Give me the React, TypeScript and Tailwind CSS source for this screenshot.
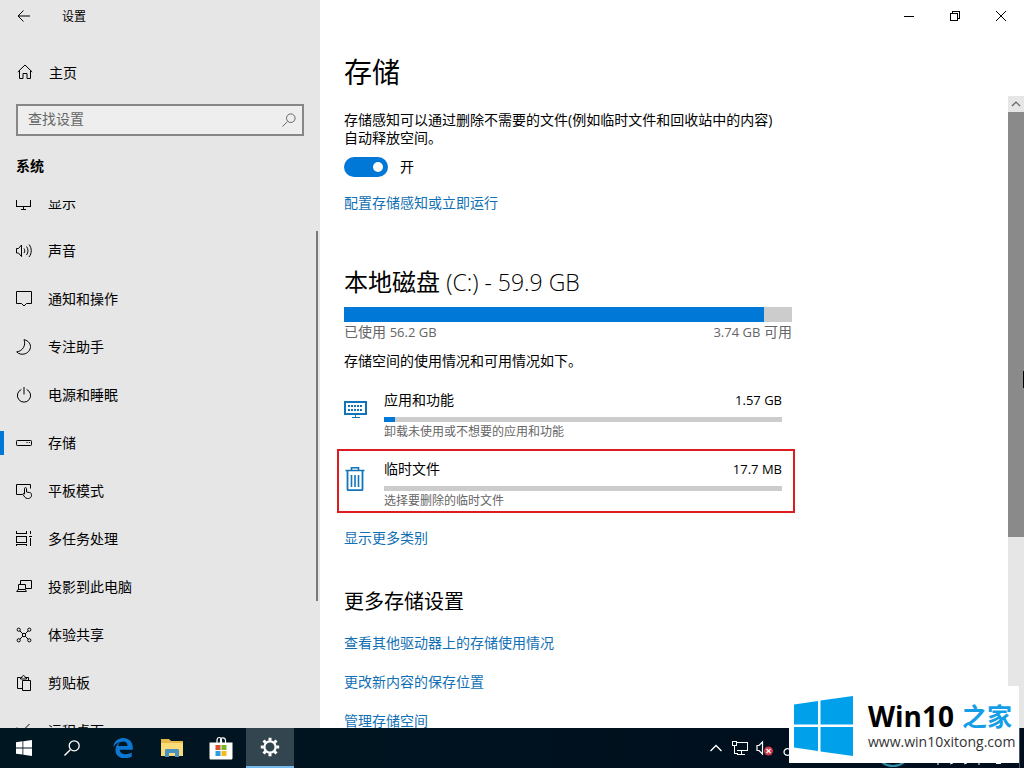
// src/App.tsx
import { useState } from "react";
import type { ReactNode } from "react";

type NavItem = { label: string; icon: ReactNode; active?: boolean };

function Icon({ children, crisp }: { children: ReactNode; crisp?: boolean }) {
  return (
    <svg
      viewBox="0 0 16 16"
      className="h-4 w-4 shrink-0"
      fill="none"
      stroke="currentColor"
      shapeRendering={crisp ? "crispEdges" : "auto"}
      aria-hidden="true"
    >
      {children}
    </svg>
  );
}

const NAV: NavItem[] = [
  {
    label: "显示",
    icon: (
      <Icon crisp>
        <path d="M.5 2.5h14v9H.5zM7.5 12v2M5 14.5h5" />
      </Icon>
    ),
  },
  {
    label: "声音",
    icon: (
      <Icon>
        <path d="M.5 5.500h2l3-3.500v11.500l-3-3.500h-2z" />
        <path d="M8 5.500c1 1.300 1 3.200 0 4.500M10.500 3.500c2 2.500 2 6 0 8.500M13 1.500c3 3.700 3 8.800 0 12.500" />
      </Icon>
    ),
  },
  {
    label: "通知和操作",
    icon: (
      <Icon>
        <path d="M.5.5h15v12h-5L8 15l-2.500-2.500h-5z" />
      </Icon>
    ),
  },
  {
    label: "专注助手",
    icon: (
      <Icon>
        <path d="M8 .7c2.200 5.600-1.300 11.400-7.300 12.200 2 2.200 5.400 3 8.600 1.800 3.700-1.500 5.900-5 5-8.700C13.500 3.200 11 1.100 8 .7z" />
      </Icon>
    ),
  },
  {
    label: "电源和睡眠",
    icon: (
      <Icon>
        <path d="M8 0v7.500M5.300 2.500a6.600 6.600 0 1 0 5.400 0" />
      </Icon>
    ),
  },
  {
    label: "存储",
    active: true,
    icon: (
      <Icon>
        <rect x=".5" y="5.500" width="15" height="5" rx=".8" />
        <path d="M10.500 7.500h1M12.800 7.500h1" />
      </Icon>
    ),
  },
  {
    label: "平板模式",
    icon: (
      <Icon>
        <path d="M6.500 11.500h-6V1.500h14v4" />
        <path d="M8.500 11V5.700c0-1.500 2-1.500 2 0V9l3.300.6c1 .2 1.700.8 1.700 1.700v.9c0 1.900-1.300 3.300-3.200 3.300h-.8c-1.200 0-2-.5-2.600-1.300L7 11.600c-.6-1 .6-1.700 1.500-.6z" />
      </Icon>
    ),
  },
  {
    label: "多任务处理",
    icon: (
      <Icon crisp>
        <path d="M.5 0v2.500h10V0M.5 5.500h10v6H.5zM.5 15v-1.500h10V15M14.500 0v3M14.500 7v8M13 5.500h3" />
      </Icon>
    ),
  },
  {
    label: "投影到此电脑",
    icon: (
      <Icon>
        <path d="M4.500 5V1.500h11v8h-5.500M2.500 10V5.500h7V10M2 10.500h7.500l.8 2H.7z" />
      </Icon>
    ),
  },
  {
    label: "体验共享",
    icon: (
      <Icon>
        <circle cx="2.700" cy="2.700" r="1.600" />
        <circle cx="13.300" cy="2.700" r="1.600" />
        <circle cx="2.700" cy="13.300" r="1.600" />
        <circle cx="13.300" cy="13.300" r="1.600" />
        <circle cx="8" cy="8" r="1.700" />
        <path d="M3.900 3.900l2.900 2.900M12.100 3.900L9.200 6.800M3.900 12.100l2.900-2.900M12.100 12.100L9.200 9.200" />
      </Icon>
    ),
  },
  {
    label: "剪贴板",
    icon: (
      <Icon>
        <path d="M6.500 13.500h-5v-11H4M10 2.500h2.500V5M4.500 4V2.500H6c0-2.600 3-2.600 3 0h1.500V4zM6.500 5.500h8v10h-8z" />
      </Icon>
    ),
  },
  {
    label: "远程桌面",
    icon: (
      <Icon>
        <path d="M13.500 1L6.500 8l7 7M1 4.500l3.500 3.500L1 11.500" />
      </Icon>
    ),
  },
];

const CATEGORIES = [
  {
    name: "应用和功能",
    size: "1.57 GB",
    hint: "卸载未使用或不想要的应用和功能",
    percent: 2.8,
    marked: false,
    icon: (
      <svg viewBox="0 0 24 24" className="h-6 w-6" fill="none" stroke="#1374b8" shapeRendering="crispEdges" aria-hidden="true">
        <path d="M1 4h21v12H1z" strokeWidth="2" />
        <path d="M11.500 17v2M8 19.500h8" />
        <path d="M4 8h15M4 12h15" strokeWidth="2" strokeDasharray="2 1" />
      </svg>
    ),
  },
  {
    name: "临时文件",
    size: "17.7 MB",
    hint: "选择要删除的临时文件",
    percent: 0,
    marked: true,
    icon: (
      <svg viewBox="0 0 24 24" className="h-6 w-6" fill="none" stroke="#1374b8" aria-hidden="true">
        <path d="M1.500 3.500h19M7.500 3V.8h7V3" strokeWidth="1.600" />
        <path d="M3.500 4v18.200c0 .6.400 1 1 1h13c.6 0 1-.4 1-1V4" strokeWidth="1.800" />
        <path d="M7.500 8v12M11 8v12M14.500 8v12" strokeWidth="1.600" />
      </svg>
    ),
  },
];

const MORE_LINKS = ["查看其他驱动器上的存储使用情况", "更改新内容的保存位置", "管理存储空间"];

const linkClass = "text-sm leading-5 text-[#1170b5] hover:text-gray-500";

function Sidebar() {
  return (
    <aside className="relative flex w-80 shrink-0 flex-col bg-[#e6e6e6]">
      <div className="flex h-8 items-center pl-4">
        <button type="button" aria-label="返回" className="mr-[30px]">
          <Icon>
            <path d="M14 8H2M7.500 2.500L2 8l5.500 5.500" />
          </Icon>
        </button>
        <span className="pt-0.5 text-xs leading-4">设置</span>
      </div>

      <a href="#home" className="mt-4 flex h-12 items-center gap-4 pl-[17px] text-sm">
        <Icon>
          <path d="M.8 8L8 1l7.200 7M2.500 6.500v8h3.500v-5h4v5h3.500v-8" />
        </Icon>
        <span className="pt-0.5">主页</span>
      </a>

      <label className="mx-4 mt-2 flex h-8 items-center border-2 border-[#868686] bg-[#eeeeee] pr-[5px] text-[#666666]">
        <input
          type="text"
          aria-label="查找设置"
          placeholder="查找设置"
          className="min-w-0 flex-1 bg-transparent pb-0.5 pl-[10px] text-sm leading-5 outline-none placeholder:text-[#666666]"
        />
        <Icon>
          <path d="M1.500 14.500L6.500 9.500" />
          <circle cx="9.800" cy="6.200" r="4.300" />
        </Icon>
      </label>

      <h2 className="mt-5 pl-4 text-sm leading-5 font-bold">系统</h2>

      {/* list is scrolled a little, so the first entry is cut */}
      <nav className="mt-6 min-h-0 flex-1 overflow-hidden">
        <ul className="-mt-[21px]">
          {NAV.map((item) => (
            <li key={item.label}>
              <a href="#nav" className="flex h-12 items-center text-sm">
                <span className={item.active ? "h-6 w-1 bg-[#0078d7]" : "h-6 w-1"} />
                <span className="mr-4 ml-3 pb-px">{item.icon}</span>
                {item.label}
              </a>
            </li>
          ))}
        </ul>
      </nav>
      <div className="absolute top-[231px] right-[2px] h-[370px] w-[2px] bg-[#7a7a7a]" />
    </aside>
  );
}

function WindowButtons() {
  return (
    <div className="flex h-8 justify-end">
      <button type="button" aria-label="最小化" className="flex w-[46px] items-center justify-center">
        <Icon crisp>
          <path d="M3 8.500h10" />
        </Icon>
      </button>
      <button type="button" aria-label="还原" className="flex w-[46px] items-center justify-center">
        <Icon crisp>
          <path d="M3.500 5.500h7v7h-7zM5.500 5V3.500h7v7H11" />
        </Icon>
      </button>
      <button type="button" aria-label="关闭" className="flex w-[46px] items-center justify-center">
        <Icon>
          <path d="M3 3l10 10M13 3L3 13" />
        </Icon>
      </button>
    </div>
  );
}

function StoragePage() {
  const [sense, setSense] = useState(true);

  return (
    <div className="max-w-[448px] pt-[15px]">
      <p className="text-sm leading-[18px]">
        存储感知可以通过删除不需要的文件(例如临时文件和回收站中的内容)
        <br />
        自动释放空间。
      </p>
      <label className="mt-[10px] flex h-5 items-center gap-3 text-sm leading-5">
        <input
          type="checkbox"
          checked={sense}
          onChange={(e) => setSense(e.target.checked)}
          className="relative h-5 w-11 appearance-none rounded-full bg-gray-500 after:absolute after:top-[5px] after:left-[5px] after:h-[10px] after:w-[10px] after:rounded-full after:bg-white checked:bg-[#0078d7] checked:after:left-[29px]"
        />
        {sense ? "开" : "关"}
      </label>
      <a href="#sense" className={`mt-4 block ${linkClass}`}>
        配置存储感知或立即运行
      </a>

      <h2 className="mt-[53px] text-2xl leading-8">
        本地磁盘 <span className="text-[23px] font-light">(C:) - 59.9 GB</span>
      </h2>
      <div className="mt-[9px] h-[15px] bg-[#cccccc]">
        <div className="h-full bg-[#0078d7]" style={{ width: `${(56.2 / 59.9) * 100}%` }} />
      </div>
      <div className="flex justify-between text-sm leading-5 text-[#666666]">
        <span>
          已使用 <span className="text-[13px]">56.2 GB</span>
        </span>
        <span>
          <span className="text-[13px]">3.74 GB</span> 可用
        </span>
      </div>
      <p className="mt-[9px] text-sm leading-5">存储空间的使用情况和可用情况如下。</p>

      <ul className="mt-[9px] -mr-[3px] -ml-[7px] flex flex-col gap-[5px]">
        {CATEGORIES.map((c) => (
          <li
            key={c.name}
            className={`flex h-16 items-center gap-4 border-2 pr-[11px] pl-[5px] ${
              c.marked ? "border-[#dc1c20]" : "border-transparent"
            }`}
          >
            <span className="pb-1">{c.icon}</span>
            <div className="flex-1 pt-2">
              <div className="flex justify-between text-sm leading-5">
                <span>{c.name}</span>
                <span className="text-[13px]">{c.size}</span>
              </div>
              <div className="mt-[7px] h-[5px] bg-[#cccccc]">
                <div className="h-full bg-[#0078d7]" style={{ width: `${c.percent}%` }} />
              </div>
              <p className="text-xs leading-5 text-[#666666]">{c.hint}</p>
            </div>
          </li>
        ))}
      </ul>
      <a href="#more" className={`mt-[15px] block ${linkClass}`}>
        显示更多类别
      </a>

      <h2 className="mt-10 text-xl leading-7">更多存储设置</h2>
      <div className="mt-[17px] flex flex-col gap-[19px]">
        {MORE_LINKS.map((text) => (
          <a key={text} href="#settings" className={linkClass}>
            {text}
          </a>
        ))}
      </div>
    </div>
  );
}

function ScrollBar() {
  return (
    <div className="relative flex w-4 shrink-0 flex-col bg-[#e6e6e6]">
      <button type="button" aria-label="向上滚动" className="h-4 text-[#606060]">
        <Icon>
          <path d="M4 10l4-4 4 4" strokeWidth="1.200" />
        </Icon>
      </button>
      <div className="h-[425px] bg-[#8a8a8a]" />
      <div className="absolute top-[275px] right-0 h-[17px] w-px bg-black" />
    </div>
  );
}

function Taskbar() {
  return (
    <footer className="flex h-10 shrink-0 items-stretch bg-gradient-to-r from-[#001722] to-[#000d1c] text-white">
      <button type="button" aria-label="开始" className="flex w-12 items-center justify-center">
        <svg viewBox="0 0 16 16" className="h-4 w-4" fill="currentColor" aria-hidden="true">
          <path d="M0 2.200l6.500-.9v6.200H0zM7.300 1.200L16 0v7.500H7.300zM0 8.400h6.500v6.200L0 13.700zM7.300 8.400H16V16l-8.700-1.200z" />
        </svg>
      </button>
      <button type="button" aria-label="搜索" className="flex w-12 items-center justify-center">
        <Icon>
          <path d="M.5 15.500L6.300 9.700" strokeWidth="1.400" />
          <circle cx="10.200" cy="5.800" r="5" strokeWidth="1.300" />
        </Icon>
      </button>
      <div className="ml-[3px] flex gap-px">
        <button type="button" aria-label="Edge" className="flex w-12 items-center justify-center">
          <svg viewBox="0 0 20 20" className="h-5 w-5" fill="#0c78d4" aria-hidden="true">
            <path d="M.3 9C1 3.700 4.800 0 10.200 0c6 0 9.600 4.300 9.600 9.700v2H6.700c.2 3 2.800 4.500 6 4.500 2.200 0 4.200-.6 6-1.700v4.200c-2 1-4.400 1.500-7 1.500-5.500 0-9.200-3.200-9.200-8.300 0-3.500 1.900-6.300 5-7.800C6 5 5.500 6.300 5.300 7.900h9.200c0-2.600-1.400-4.300-4.200-4.300C6 3.600 2.400 5.700.3 9z" />
          </svg>
        </button>
        <button type="button" aria-label="文件资源管理器" className="flex w-12 items-center justify-center">
          <svg viewBox="0 0 22 18" className="h-[18px] w-[22px]" aria-hidden="true">
            <path d="M0 0h8l2 2h12v15H0z" fill="#e9b84a" />
            <path d="M0 4h22v13H0z" fill="#fbdb77" />
            <path d="M4 18v-6.500c0-1 .7-1.500 1.500-1.500h11c.8 0 1.500.5 1.500 1.500V18h-4v-4H8v4z" fill="#4a93c0" />
          </svg>
        </button>
        <button type="button" aria-label="应用商店" className="flex w-12 items-center justify-center">
          <svg viewBox="0 0 24 24" className="h-6 w-6" aria-hidden="true">
            <path d="M8 7V4.500C8 .5 12.500.5 12.500 4.500V7M11.500 7V4c0-3 5-3 5 .5V7" fill="none" stroke="#fff" strokeWidth="1.200" />
            <path d="M.5 6.500h23V22c0 1-.6 1.500-1.500 1.500H2c-.9 0-1.500-.5-1.500-1.500z" fill="#fff" />
            <path d="M6.500 9h5v5h-5z" fill="#d8512e" />
            <path d="M12.500 9h5v5h-5z" fill="#7cb32a" />
            <path d="M6.500 15h5v5h-5z" fill="#2a9fe0" />
            <path d="M12.500 15h5v5h-5z" fill="#f5b921" />
          </svg>
        </button>
        <button
          type="button"
          aria-label="设置"
          className="flex w-12 items-center justify-center border-b-2 border-[#76b9ed] bg-[#33454f]"
        >
          <svg viewBox="0 0 20 20" className="h-5 w-5" fill="none" stroke="currentColor" aria-hidden="true">
            <circle cx="10" cy="10" r="5.600" strokeWidth="2.200" />
            <path
              d="M10 .8v3M10 16.200v3M.8 10h3M16.200 10h3M3.500 3.500l2.100 2.100M14.400 14.400l2.100 2.100M3.500 16.500l2.100-2.100M14.400 5.600l2.100-2.100"
              strokeWidth="3"
            />
          </svg>
        </button>
      </div>

      <div className="ml-auto flex items-center gap-2">
        <Icon>
          <path d="M2.500 11L8 5.500l5.500 5.500" strokeWidth="1.400" />
        </Icon>
        <Icon crisp>
          <path d="M5 2.500h10.500v8H4.500M.5 1.500h4v4h-4zM2.500 6v7.500h3M9.500 11v3M5 14.500h8" />
        </Icon>
        <svg viewBox="0 0 18 16" className="h-4 w-[18px]" fill="none" stroke="currentColor" aria-hidden="true">
          <path d="M1 5.500h2L6.500 2v12L3 10.500H1z" strokeWidth="1.200" />
          <circle cx="12.500" cy="11" r="4.500" fill="#d13a48" stroke="none" />
          <path d="M10.500 9l4 4M14.500 9l-4 4" strokeWidth="1.200" />
        </svg>
        {/* input method badge and clock area */}
        <svg viewBox="0 0 237 40" className="h-10 w-[237px]" fill="none" stroke="currentColor" aria-hidden="true">
          <path d="M8 21.500c-3.500-2-6 0-6 2.500s2.500 4.500 6 2.500" strokeWidth="1.300" />
          <ellipse cx="111" cy="28" rx="14" ry="10" stroke="#2f8fa8" strokeWidth="2" />
          <path d="M155 36h2M168 36l3-1M182 36l3-1M196 36h2M214 35.500h5" />
        </svg>
      </div>
      <div className="w-[5px] border-l border-[#4a545e]" />
    </footer>
  );
}

function Watermark() {
  return (
    <div className="absolute right-[5px] bottom-[5px] flex h-[77px] w-[230px] items-center gap-[15px] bg-white pt-[3px] pl-[5px]">
      <svg viewBox="0 0 59 60" className="h-[60px] w-[59px] shrink-0" fill="#00a1ea" aria-hidden="true">
        <path d="M0 8.500l24-3.500v23.500H0zM26.500 4.500L59 0v28.500H26.500zM0 31h24v24L0 51.500zM26.500 31H59v29l-32.500-4.500z" />
      </svg>
      <div>
        <p className="flex items-center gap-2 leading-8 font-bold whitespace-nowrap">
          <span className="text-[28px] text-black">Win10</span>
          <span className="text-[25px] text-[#149ee8]">之家</span>
        </p>
        <p className="text-sm leading-5 text-[#333333]">www.win10xitong.com</p>
      </div>
    </div>
  );
}

export default function App() {
  return (
    <div className="relative flex h-screen flex-col overflow-hidden bg-white font-['Open_Sans','Noto_Sans_CJK_SC',sans-serif] text-black">
      <div className="flex min-h-0 flex-1">
        <Sidebar />
        <main className="flex min-w-0 flex-1 flex-col">
          <WindowButtons />
          <h1 className="mt-5 pl-6 text-[28px] leading-10">存储</h1>
          <div className="mt-1 flex min-h-0 flex-1">
            <div className="min-w-0 flex-1 overflow-hidden pl-6">
              <StoragePage />
            </div>
            <ScrollBar />
          </div>
        </main>
      </div>
      <Taskbar />
      <Watermark />
    </div>
  );
}
